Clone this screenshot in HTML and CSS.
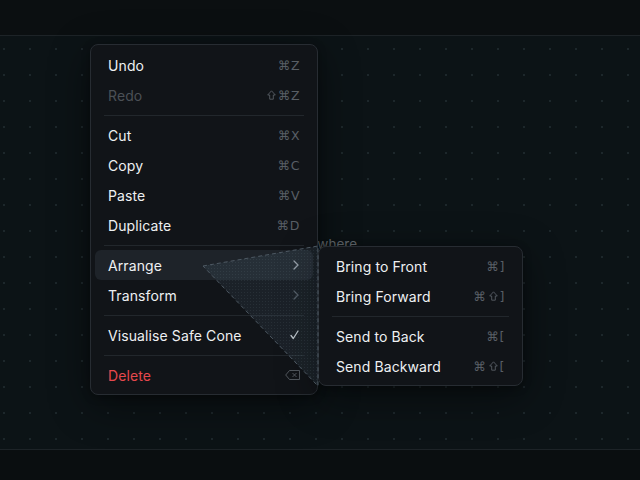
FILE: index.html
```html
<!DOCTYPE html>
<html>
<head>
<meta charset="utf-8">
<link rel="stylesheet" href="styles.css">
</head>
<body>
<div class="app">
  <header class="topbar"></header>
  <main class="canvas">
    <span class="hint">Right-click anywhere</span>

    <div class="menu main-menu">
      <div class="item"><span class="label">Undo</span><span class="kbd">⌘Z</span></div>
      <div class="item disabled"><span class="label">Redo</span><span class="kbd"><svg class="shift" width="9" height="10" viewBox="0 0 9 10"><path d="M4.5 0.8L0.7 5H2.7V9.2H6.3V5H8.3Z" fill="none" stroke="currentColor" stroke-width="0.9" stroke-linejoin="round"/></svg>⌘Z</span></div>
      <div class="sep"></div>
      <div class="item"><span class="label">Cut</span><span class="kbd">⌘X</span></div>
      <div class="item"><span class="label">Copy</span><span class="kbd">⌘C</span></div>
      <div class="item"><span class="label">Paste</span><span class="kbd">⌘V</span></div>
      <div class="item"><span class="label">Duplicate</span><span class="kbd">⌘D</span></div>
      <div class="sep"></div>
      <div class="item active"><span class="label">Arrange</span>
        <svg class="chev" width="6" height="10" viewBox="0 0 6 10"><path d="M1 1l4 4-4 4" fill="none" stroke="currentColor" stroke-width="1.3" stroke-linecap="round" stroke-linejoin="round"/></svg>
      </div>
      <div class="item"><span class="label">Transform</span>
        <svg class="chev dim" width="6" height="10" viewBox="0 0 6 10"><path d="M1 1l4 4-4 4" fill="none" stroke="currentColor" stroke-width="1.3" stroke-linecap="round" stroke-linejoin="round"/></svg>
      </div>
      <div class="sep"></div>
      <div class="item"><span class="label">Visualise Safe Cone</span>
        <svg class="check" width="9" height="10" viewBox="0 0 9 10"><path d="M1 5.5l2.3 3L8 1" fill="none" stroke="currentColor" stroke-width="1.3" stroke-linecap="round" stroke-linejoin="round"/></svg>
      </div>
      <div class="sep"></div>
      <div class="item danger"><span class="label">Delete</span>
        <svg class="del" width="15" height="10" viewBox="0 0 15 10"><path d="M4.5 0.5H14.5V9.5H4.5L0.7 5Z" fill="none" stroke="currentColor" stroke-width="0.9" stroke-linejoin="round"/><path d="M7.8 3.3l3.4 3.4M11.2 3.3l-3.4 3.4" stroke="currentColor" stroke-width="0.9" stroke-linecap="round"/></svg>
      </div>
    </div>

    <div class="menu sub-menu">
      <div class="item"><span class="label">Bring to Front</span><span class="kbd">⌘]</span></div>
      <div class="item"><span class="label">Bring Forward</span><span class="kbd">⌘<svg class="shift" width="9" height="10" viewBox="0 0 9 10"><path d="M4.5 0.8L0.7 5H2.7V9.2H6.3V5H8.3Z" fill="none" stroke="currentColor" stroke-width="0.9" stroke-linejoin="round"/></svg>]</span></div>
      <div class="sep"></div>
      <div class="item"><span class="label">Send to Back</span><span class="kbd">⌘[</span></div>
      <div class="item"><span class="label">Send Backward</span><span class="kbd">⌘<svg class="shift" width="9" height="10" viewBox="0 0 9 10"><path d="M4.5 0.8L0.7 5H2.7V9.2H6.3V5H8.3Z" fill="none" stroke="currentColor" stroke-width="0.9" stroke-linejoin="round"/></svg>[</span></div>
    </div>

    <svg class="cone" width="640" height="413" viewBox="0 0 640 413">
      <defs>
        <pattern id="dots" width="3" height="3" patternUnits="userSpaceOnUse">
          <rect x="1" y="1" width="1" height="1" fill="rgba(150,185,200,0.09)"/>
        </pattern>
      </defs>
      <polygon points="203,230 318,210 318,350" fill="rgba(110,150,170,0.11)"/>
      <polygon points="203,230 318,210 318,350" fill="url(#dots)"/>
      <polygon points="203,230 318,210 318,350" fill="none" stroke="#4d5862" stroke-width="1" stroke-dasharray="4 3"/>
    </svg>
  </main>
  <footer class="bottombar"></footer>
</div>
</body>
</html>
```

FILE: styles.css
```css
html, body {
  margin: 0;
  padding: 0;
  width: 640px;
  height: 480px;
  overflow: hidden;
  background: #0b0f12;
  font-family: "Inter", "DejaVu Sans", sans-serif;
}

.app {
  display: flex;
  flex-direction: column;
  width: 640px;
  height: 480px;
}

.topbar {
  height: 35px;
  flex: none;
  background: #0b0f11;
  border-bottom: 1px solid #1d2327;
}

.canvas {
  position: relative;
  flex: 1;
  background-color: #0c1316;
  background-image: radial-gradient(circle at 13px 13px, #1d272b 0.9px, transparent 1.2px);
  background-size: 26px 26px;
  background-position: -9px 0;
}

.bottombar {
  height: 30px;
  flex: none;
  background: #0a0e10;
  border-top: 1px solid #1d2327;
}

.hint {
  position: absolute;
  right: 283px;
  top: 200px;
  font-size: 13.5px;
  color: #6a7075;
  white-space: nowrap;
}

.menu {
  position: absolute;
  box-sizing: border-box;
  display: flex;
  flex-direction: column;
  background: #111418;
  border: 1px solid #272c32;
  border-radius: 8px;
  padding: 5px 4px 4px;
  box-shadow: 0 10px 40px rgba(0, 0, 0, 0.45), 0 2px 8px rgba(0, 0, 0, 0.3);
}

.main-menu {
  left: 90px;
  top: 8px;
  width: 228px;
}

.sub-menu {
  left: 318px;
  top: 210px;
  width: 205px;
  padding: 4px;
  z-index: 2;
}

.item {
  display: flex;
  align-items: center;
  justify-content: space-between;
  height: 30px;
  padding: 0 13px;
  border-radius: 6px;
  font-size: 14px;
  color: #eef0f2;
  letter-spacing: 0.1px;
}

.item.active {
  background: #1e2329;
}

.item.disabled .label {
  color: #4b5056;
}

.item.danger .label {
  color: #e5484d;
}

.kbd {
  display: flex;
  align-items: center;
  gap: 1px;
  font-family: "DejaVu Sans", sans-serif;
  font-size: 12.5px;
  color: #585e65;
  letter-spacing: 0.5px;
}

.shift {
  margin: 0 1px;
}

.chev {
  color: #9ba1a8;
  margin-right: 1px;
}

.chev.dim {
  color: #50565d;
}

.check {
  color: #c8ccd0;
  margin-right: 1px;
}

.del {
  color: #5a6067;
}

.sep {
  height: 1px;
  margin: 4.5px 9px;
  background: #22272c;
}

.cone {
  position: absolute;
  left: 0;
  top: 0;
  pointer-events: none;
  z-index: 3;
}
```
